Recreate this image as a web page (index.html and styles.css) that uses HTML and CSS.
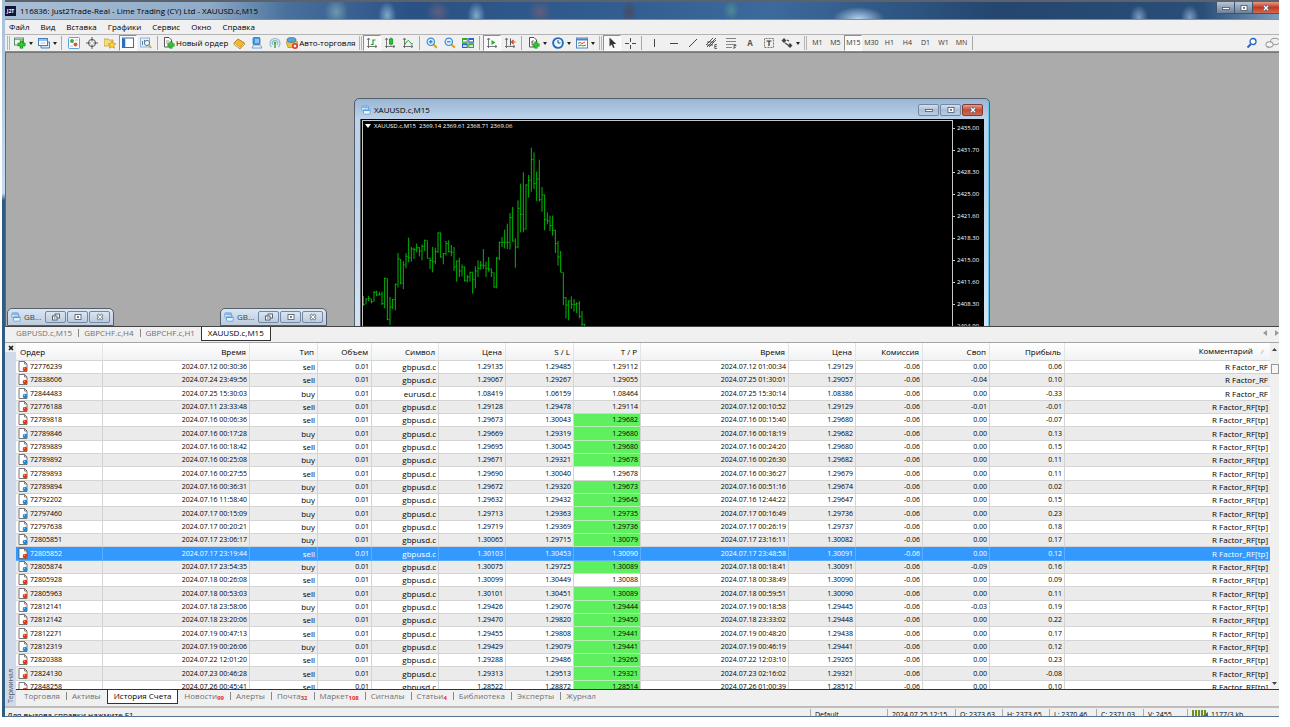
FILE: index.html
```html
<!DOCTYPE html>
<html lang="ru">
<head>
<meta charset="utf-8">
<title>116836: Just2Trade-Real - Lime Trading (CY) Ltd - XAUUSD.c,M15</title>
<link rel="stylesheet" href="styles.css">
</head>
<body>
<svg class="defs" aria-hidden="true">
  <symbol id="doc" viewBox="0 0 10 11"><path d="M1 .5h5.500L9 3v7.500H1z" fill="#fff" stroke="#555" stroke-width=".8"/><path d="M6.500 .5V3H9" fill="none" stroke="#555" stroke-width=".7"/></symbol>
  <symbol id="sell" viewBox="0 0 10 11"><use href="#doc"/><circle cx="7" cy="8" r="2.300" fill="#dc3912"/><circle cx="6.400" cy="7.300" r=".7" fill="#ffa284"/></symbol>
  <symbol id="buy" viewBox="0 0 10 11"><use href="#doc"/><circle cx="7" cy="8" r="2.300" fill="#1e86d6"/><circle cx="6.400" cy="7.300" r=".7" fill="#a5dcff"/></symbol>
  <symbol id="wins" viewBox="0 0 12 12"><rect x="1" y="1" width="8" height="6" rx="1" fill="#e8f4ff" stroke="#5b9bdb"/><path d="M1.500 2.500h7" stroke="#5b9bdb" stroke-width="1.500"/><rect x="3" y="5" width="8" height="6" rx="1" fill="#e8f4ff" stroke="#5b9bdb"/><path d="M3.500 6.500h7" stroke="#5b9bdb" stroke-width="1.500"/></symbol>
  <symbol id="min" viewBox="0 0 10 8"><rect x="1.500" y="3.500" width="7" height="2" fill="#fff" stroke="#4a5566" stroke-width=".8"/></symbol>
  <symbol id="max" viewBox="0 0 10 8"><rect x="2" y="1.500" width="6" height="5" fill="#fff" stroke="#4a5566" stroke-width=".8"/><rect x="4" y="3.200" width="2" height="1.500" fill="#4a5566"/></symbol>
  <symbol id="rest" viewBox="0 0 10 8"><rect x="4" y="1" width="4.500" height="4" fill="#fff" stroke="#4a5566" stroke-width=".9"/><rect x="1.500" y="3" width="4.500" height="4" fill="#fff" stroke="#4a5566" stroke-width=".9"/><path d="M3 5h1.500" stroke="#4a5566"/></symbol>
  <symbol id="cls" viewBox="0 0 10 8"><path d="M2.500 1.500l5 5M7.500 1.500l-5 5" stroke="#4a5566" stroke-width="2.600"/><path d="M2.800 1.800l4.400 4.400M7.200 1.800l-4.400 4.400" stroke="#fff" stroke-width="1.300"/></symbol>
  <symbol id="plus" viewBox="0 0 8 8"><path d="M4 .5v7M.5 4h7" stroke="#0a8a12" stroke-width="3"/><path d="M4 1v6M1 4h6" stroke="#2fd02f" stroke-width="1.600"/></symbol>
  <symbol id="axes" viewBox="0 0 12 12"><path d="M2.500 1v10M1 9.500h10M1.200 2.800L2.500 1l1.300 1.800M9.200 8.200l1.800 1.300-1.800 1.300" fill="none" stroke="#666" stroke-width=".9"/></symbol>
  <symbol id="lens" viewBox="0 0 12 12"><path d="M7.200 7.200l3.600 3.600" stroke="#dda62a" stroke-width="2.200"/><circle cx="4.800" cy="4.800" r="3.700" fill="#d9efff" stroke="#3f8fd4" stroke-width="1.200"/></symbol>
</svg>
<div class="app">
  <header class="titlebar">
    <span class="logo">J2T</span>
    <h1>116836: Just2Trade-Real - Lime Trading (CY) Ltd - XAUUSD.c,M15</h1>
    <div class="caption">
      <button aria-label="Свернуть"><svg><use href="#min"/></svg></button><button aria-label="Развернуть"><svg><use href="#max"/></svg></button><button class="close" aria-label="Закрыть"><svg><use href="#cls"/></svg></button>
    </div>
  </header>
  <nav class="menu">
    <button>Файл</button><button>Вид</button><button>Вставка</button><button>Графики</button><button>Сервис</button><button>Окно</button><button>Справка</button>
  </nav>
  <div class="toolbar">
    <i class="grip"></i>
    <button class="drop" aria-label="Новый график"><svg viewBox="0 0 12 12"><rect x=".5" y="1" width="9" height="7" fill="#eef7ee" stroke="#5d8a6a"/><path d="M1 2.500h8" stroke="#7fb58a"/><use href="#plus" x="3" y="3" width="9" height="9"/></svg></button>
    <button class="drop" aria-label="Профили"><svg viewBox="0 0 12 12"><path d="M3 9v2h8.500V5H10" fill="#cfe3f6" stroke="#4a86c4"/><rect x=".5" y="1.500" width="9" height="7" fill="#fff" stroke="#3f7fc2"/><path d="M1 3h8" stroke="#3f7fc2"/><path d="M2.500 6h5" stroke="#9cc3e8"/></svg></button>
    <i class="sep"></i>
    <button aria-label="Обзор рынка"><svg viewBox="0 0 12 12"><rect x=".5" y=".5" width="11" height="11" rx="1" fill="#fff" stroke="#5aa0dc"/><circle cx="4" cy="4" r="1.900" fill="#2fae3a"/><circle cx="7.500" cy="7.500" r="2" fill="#e2553c"/><path d="M7 3h3M2 9h3" stroke="#a8c8e6"/></svg></button>
    <button aria-label="Окно данных"><svg viewBox="0 0 12 12"><circle cx="6" cy="6" r="3.600" fill="none" stroke="#555"/><path d="M6 0v4.500M6 7.500V12M0 6h4.500M7.500 6H12" stroke="#555"/></svg></button>
    <button aria-label="Навигатор"><svg viewBox="0 0 12 12"><path d="M0 2h4l1 1h4v6H0z" fill="#f5dc7c" stroke="#c89c2c" stroke-width=".8"/><path d="M8 4l1.200 2.500 2.600.3-2 1.700.6 2.700L8 9.800l-2.400 1.400.6-2.700-2-1.700 2.600-.3z" fill="#ffd83a" stroke="#bd8a18" stroke-width=".7"/></svg></button>
    <button class="on" aria-label="Терминал"><svg viewBox="0 0 12 12"><rect x=".5" y="1" width="11" height="9.500" fill="#fff" stroke="#2a6fb8"/><path d="M2 1.500v9" stroke="#2a6fb8" stroke-width="2.500"/></svg></button>
    <button aria-label="Тестер"><svg viewBox="0 0 12 12"><rect x=".5" y="1" width="9" height="9" fill="#e6f0fa" stroke="#8fb2d4"/><path d="M2.500 8V4M4.500 7V3" stroke="#5580aa"/><circle cx="7" cy="6" r="2.600" fill="#dff" stroke="#678"/><path d="M8.800 8l2.500 3" stroke="#d6a030" stroke-width="1.600"/></svg></button>
    <i class="sep"></i>
    <button class="wide"><svg viewBox="0 0 12 12"><path d="M1.500 .5H6L8.500 3v7h-7z" fill="#fff" stroke="#555"/><path d="M3 4h3M3 6h3" stroke="#999"/><use href="#plus" x="4" y="4" width="8" height="8"/></svg>Новый ордер</button>
    <button aria-label="MetaEditor"><svg viewBox="0 0 12 12"><path d="M1 6l4-4 6.500 4L7 10.500z" fill="#f2b92d" stroke="#a8720c" stroke-width=".8"/><path d="M1 6v1.500L7 11.800V10.500M7 11.800L11.500 7.500V6" fill="#fff2c4" stroke="#a8720c" stroke-width=".7"/></svg></button>
    <button aria-label="Сервер"><svg viewBox="0 0 12 12"><rect x="2" y=".5" width="7" height="7" rx="1" fill="#3f96e4" stroke="#226db8" stroke-width=".7"/><path d="M4 3h4M4 5h4" stroke="#d8eeff"/><path d="M1 11l1.500-3h7l1.500 3z" fill="#e8f2fb" stroke="#5b8fbd" stroke-width=".8"/></svg></button>
    <button aria-label="Сигналы"><svg viewBox="0 0 12 12"><path d="M2.500 10a5 5 0 1 1 7 0M4 8a2.700 2.700 0 1 1 4 0" fill="none" stroke="#8fb6ce" stroke-width="1.100"/><circle cx="6" cy="6" r="1.200" fill="#3fae3f"/><path d="M6 6v5" stroke="#3fae3f" stroke-width="1.500"/></svg></button>
    <button class="wide"><svg viewBox="0 0 12 12"><path d="M0 5l6-2 6 2-1 5.500H2z" fill="#f0c040" stroke="#b4861c" stroke-width=".7"/><ellipse cx="5.500" cy="3" rx="4.500" ry="2.400" fill="#58a5dc" stroke="#2a6fa8" stroke-width=".7"/><circle cx="9" cy="9" r="3" fill="#e03a1e"/><rect x="7.800" y="7.800" width="2.400" height="2.400" fill="#fff"/></svg>Авто-торговля</button>
    <i class="grip"></i>
    <button class="on" aria-label="Бары"><svg viewBox="0 0 12 12"><use href="#axes"/><path d="M7 2.500v5.500M7 3h2.500M4.800 7.500H7" stroke="#18a028" stroke-width="1.200"/></svg></button>
    <button aria-label="Свечи"><svg viewBox="0 0 12 12"><use href="#axes"/><path d="M7 .5v8" stroke="#0d8a1d"/><rect x="5.500" y="2" width="3.200" height="5" fill="#22c832" stroke="#0d8a1d" stroke-width=".7"/></svg></button>
    <button aria-label="Линия"><svg viewBox="0 0 12 12"><use href="#axes"/><path d="M3 7.500Q6 1.500 7.500 4.500T11 7" fill="none" stroke="#18a028"/></svg></button>
    <i class="sep"></i>
    <button aria-label="Увеличить"><svg viewBox="0 0 12 12"><use href="#lens"/><path d="M3 4.800h3.600M4.800 3v3.600" stroke="#1f6cb4"/></svg></button>
    <button aria-label="Уменьшить"><svg viewBox="0 0 12 12"><use href="#lens"/><path d="M3 4.800h3.600" stroke="#1f6cb4"/></svg></button>
    <button aria-label="Расположить"><svg viewBox="0 0 12 12"><path fill="#39a82c" d="M0 1h5.700v4.800H0zM6.300 6.300H12V11H6.300z"/><path fill="#2b62c8" d="M6.300 1H12v4.800H6.300zM0 6.300h5.700V11H0z"/><path d="M1 3.800h3.700M7.300 3.800H11M1 9h3.700M7.300 9H11" stroke="#fff" stroke-width="1.400"/></svg></button>
    <i class="sep"></i>
    <button class="on" aria-label="Автопрокрутка"><svg viewBox="0 0 12 12"><use href="#axes"/><path d="M5.500 3l4 2.500-4 2.500z" fill="#22b032"/></svg></button>
    <button aria-label="Сдвиг"><svg viewBox="0 0 12 12"><use href="#axes"/><path d="M6.500 1.500v7" stroke="#555"/><path d="M11.500 5H8M9.500 3L7.500 5l2 2" fill="none" stroke="#d2451e" stroke-width="1.200"/></svg></button>
    <i class="sep"></i>
    <button class="drop" aria-label="Индикаторы"><svg viewBox="0 0 12 12"><path d="M1.500 .5H6L8.500 3v7h-7z" fill="#fff" stroke="#555"/><path d="M5.500 3Q4 3 4 8M3 5h2.500" fill="none" stroke="#555" stroke-width=".8"/><use href="#plus" x="4" y="4" width="8" height="8"/></svg></button>
    <button class="drop" aria-label="Периоды"><svg viewBox="0 0 12 12"><circle cx="6" cy="6" r="4.900" fill="#eaf5ff" stroke="#1f6cc0" stroke-width="1.900"/><path d="M6 3v3h2.500" fill="none" stroke="#444"/></svg></button>
    <button class="drop" aria-label="Шаблоны"><svg viewBox="0 0 12 12"><rect x=".5" y="1" width="11" height="10" fill="#fff" stroke="#4a86c4"/><path d="M1 2.500h10" stroke="#4a86c4" stroke-width="2"/><path d="M2 6.500l2-1 2 1 3-1.500" fill="none" stroke="#d04828"/><path d="M2 9l3-1 2 1 3-1" fill="none" stroke="#28a038"/></svg></button>
    <i class="grip"></i>
    <button class="on" aria-label="Курсор"><svg viewBox="0 0 12 12"><path d="M3.500 .5v9l2.200-2 1.500 3.500 1.400-.6L7.200 7h3z" fill="#333"/></svg></button>
    <button aria-label="Перекрестие"><svg viewBox="0 0 12 12"><path d="M6.500 1v4M6.500 8v4M1 6.500h4M8 6.500h4" stroke="#444"/></svg></button>
    <i class="sep"></i>
    <button class="tool" aria-label="Вертикальная линия"><svg viewBox="0 0 12 12"><path d="M5.500 2v8" stroke="#444"/></svg></button>
    <button class="tool" aria-label="Горизонтальная линия"><svg viewBox="0 0 12 12"><path d="M2 6.500h8" stroke="#444"/></svg></button>
    <button class="tool" aria-label="Трендовая линия"><svg viewBox="0 0 12 12"><path d="M2 10l8-8" stroke="#444"/></svg></button>
    <button class="tool" aria-label="Канал"><svg viewBox="0 0 12 12"><path d="M0 8l7-7M1 10l9-9M3 10l7-7M1 5h7M1 8h6" stroke="#444" stroke-width=".9"/><path d="M11 7.500H8.800v4H11M8.800 9.500h2" fill="none" stroke="#444" stroke-width=".8"/></svg></button>
    <button class="tool" aria-label="Фибоначчи"><svg viewBox="0 0 12 12"><path d="M1 1.500h10M1 4.500h10M1 7.500h10M1 10.500h6" stroke="#777" stroke-width=".9"/><path d="M11.500 8.500H9V12M9 10.300h2" fill="none" stroke="#444" stroke-width=".8"/></svg></button>
    <button class="tool letter">A</button>
    <button class="tool" aria-label="Метка"><svg viewBox="0 0 12 12"><rect x="1.500" y="1.500" width="9" height="9" fill="none" stroke="#777" stroke-dasharray="1 .5"/><path d="M3.500 4h5M6 4v5" stroke="#333" stroke-width="1.200"/></svg></button>
    <button class="drop" aria-label="Стрелки"><svg viewBox="0 0 12 12"><path d="M3 1l2.500 2.500L3 6 .5 3.500zM9 6l2.500 2.500L9 11 6.500 8.500z" fill="#444"/><path d="M4 6l3 2M6 3l2 1" stroke="#444" stroke-width="1.200"/></svg></button>
    <i class="grip"></i>
    <button class="tf">M1</button><button class="tf">M5</button><button class="tf on">M15</button><button class="tf">M30</button><button class="tf">H1</button><button class="tf">H4</button><button class="tf">D1</button><button class="tf">W1</button><button class="tf">MN</button>
    <i class="sep"></i>
    <button class="push" aria-label="Поиск"><svg viewBox="0 0 12 12"><path d="M5 7L1.500 10.500" stroke="#2a62cc" stroke-width="2"/><circle cx="7" cy="4.500" r="3" fill="#fff" stroke="#2a62cc" stroke-width="1.300"/></svg></button>
    <button class="chat" aria-label="Чат"><svg viewBox="0 0 14 12"><ellipse cx="10" cy="4.500" rx="4.500" ry="3.200" fill="#eee" stroke="#999"/><path d="M3 9l-1 2.500L5 10z" fill="#999"/><ellipse cx="4.500" cy="7.500" rx="3.800" ry="2.800" fill="#f4f4f4" stroke="#888"/></svg></button>
  </div>

  <main class="desk">
    <section class="mdi chart">
      <header><svg class="ico"><use href="#wins"/></svg><h2>XAUUSD.c,M15</h2>
        <button aria-label="Свернуть"><svg><use href="#min"/></svg></button><button aria-label="Развернуть"><svg><use href="#max"/></svg></button><button class="close" aria-label="Закрыть"><svg><use href="#cls"/></svg></button></header>
      <div class="plot">
        <div class="canvas">
          <p><svg class="tri" viewBox="0 0 6 4"><path d="M0 0h6L3 4z" fill="#fff"/></svg>XAUUSD.c,M15&nbsp; 2369.14 2369.61 2368.71 2369.06</p>
          <svg class="bars" viewBox="38 78 780 621"><path class="stem" d="M39 603V633M47 610V628M55 603V618M63 611V625M71 588V620M79 587V603M87 590V602M95 590V630M103 548V640M111 550V675M119 606V690M127 612V642M135 566V646M143 474V578M151 492V568M159 498V582M167 474V520M175 428V502M183 456V500M191 458V492M199 446V472M207 456V484M215 448V496M223 434V468M231 436V490M239 488V522M247 456V532M255 458V508M263 412V474M271 412V488M279 474V508M287 438V482M295 436V472M303 450V484M311 456V528M319 496V560M327 488V546M335 508V544M343 514V560M351 540V562M359 530V560M367 530V596M375 514V580M383 496V546M391 498V524M399 462V522M407 500V546M415 486V530M423 520V546M431 532V578M439 486V580M447 440V496M455 426V456M463 404V460M471 386V462M479 354V464M487 336V440M495 430V518M503 316V460M511 266V412M519 232V412M527 268V404M535 240V308M543 158V290M551 172V282M559 230V318M567 194V320M575 276V350M583 298V406M591 352V388M599 362V408M607 362V422M615 404V474M623 438V512M631 468V532M639 532V630M647 606V670M655 616V676M663 604V642M671 612V650M679 622V654M687 618V670M695 648V699M703 686V699"/>
          <path class="tick" d="M39 628h6M47 612h6M55 610h6M63 620h6M71 592h6M79 600h6M87 598h6M95 626h6M103 550h6M111 674h6M119 636h6M127 614h6M135 568h6M143 492h6M151 564h6M159 510h6M167 484h6M175 488h6M183 462h6M191 464h6M199 458h6M207 468h6M215 454h6M223 436h6M231 490h6M239 496h6M247 500h6M255 470h6M263 414h6M271 486h6M279 476h6M287 446h6M295 470h6M303 472h6M311 516h6M319 498h6M327 528h6M335 516h6M343 556h6M351 546h6M359 532h6M367 554h6M375 528h6M383 520h6M391 510h6M399 512h6M407 520h6M415 522h6M423 532h6M431 576h6M439 490h6M447 442h6M455 442h6M463 442h6M471 442h6M479 368h6M487 438h6M495 456h6M503 340h6M511 358h6M519 402h6M527 270h6M535 256h6M543 194h6M551 266h6M559 252h6M567 314h6M575 300h6M583 374h6M591 378h6M599 392h6M607 406h6M615 446h6M623 486h6M631 532h6M639 608h6M647 630h6M655 618h6M663 628h6M671 628h6M679 626h6M687 664h6M695 688h6"/></svg>
        </div>
        <ol class="scale"><li>2435.00</li><li>2431.70</li><li>2428.30</li><li>2425.00</li><li>2421.60</li><li>2418.30</li><li>2415.00</li><li>2411.60</li><li>2408.30</li><li>2404.90</li></ol>
      </div>
    </section>
    <section class="mdi mini first"><svg class="ico"><use href="#wins"/></svg><span>GB...</span><button aria-label="Восстановить"><svg><use href="#rest"/></svg></button><button aria-label="Развернуть"><svg><use href="#max"/></svg></button><button aria-label="Закрыть"><svg><use href="#cls"/></svg></button></section>
    <section class="mdi mini second"><svg class="ico"><use href="#wins"/></svg><span>GB...</span><button aria-label="Восстановить"><svg><use href="#rest"/></svg></button><button aria-label="Развернуть"><svg><use href="#max"/></svg></button><button aria-label="Закрыть"><svg><use href="#cls"/></svg></button></section>
  </main>

  <nav class="tabs charts"><button>GBPUSD.c,M15</button><button>GBPCHF.c,H4</button><button>GBPCHF.c,H1</button><button class="active">XAUUSD.c,M15</button><span class="arrows"><svg viewBox="0 0 4 6"><path d="M4 0v6L0 3z"/></svg><svg viewBox="0 0 4 6"><path d="M0 0v6l4-3z"/></svg></span></nav>

  <section class="terminal">
    <aside><button aria-label="Закрыть"><svg viewBox="0 0 6 6"><path d="M1 1l4 4M5 1L1 5" stroke="#111" stroke-width="1.500"/></svg></button><span>Терминал</span></aside>
    <div class="panel">
      <div class="sheet">
      <table>
        <colgroup><col class="c-order"><col class="c-open"><col class="c-wide"><col class="c-vol"><col class="c-num"><col class="c-num"><col class="c-wide"><col class="c-num"><col class="c-time"><col class="c-num"><col class="c-num"><col class="c-num"><col class="c-profit"><col></colgroup>
        <thead><tr><th>Ордер<th>Время<th>Тип<th>Объем<th>Символ<th>Цена<th>S / L<th>T / P<th>Время<th>Цена<th>Комиссия<th>Своп<th>Прибыль<th class="sorted">Комментарий<i>/</i></tr></thead>
        <tbody>
        <tr><td><svg><use href="#sell"/></svg>72776239<td>2024.07.12 00:30:36<td>sell<td>0.01<td>gbpusd.c<td>1.29135<td>1.29485<td>1.29112<td>2024.07.12 01:00:34<td>1.29129<td>-0.06<td>0.00<td>0.06<td>R Factor_RF
        <tr><td><svg><use href="#sell"/></svg>72838606<td>2024.07.24 23:49:56<td>sell<td>0.01<td>gbpusd.c<td>1.29067<td>1.29267<td>1.29055<td>2024.07.25 01:30:01<td>1.29057<td>-0.06<td>-0.04<td>0.10<td>R Factor_RF
        <tr><td><svg><use href="#buy"/></svg>72844483<td>2024.07.25 15:30:03<td>buy<td>0.01<td>eurusd.c<td>1.08419<td>1.06159<td>1.08464<td>2024.07.25 15:30:14<td>1.08386<td>-0.06<td>0.00<td>-0.33<td>R Factor_RF
        <tr><td><svg><use href="#sell"/></svg>72776188<td>2024.07.11 23:33:48<td>sell<td>0.01<td>gbpusd.c<td>1.29128<td>1.29478<td>1.29114<td>2024.07.12 00:10:52<td>1.29129<td>-0.06<td>-0.01<td>-0.01<td>R Factor_RF[tp]
        <tr><td><svg><use href="#sell"/></svg>72789818<td>2024.07.16 00:06:36<td>sell<td>0.01<td>gbpusd.c<td>1.29673<td>1.30043<td class="hit">1.29682<td>2024.07.16 00:15:40<td>1.29680<td>-0.06<td>0.00<td>-0.07<td>R Factor_RF[tp]
        <tr><td><svg><use href="#buy"/></svg>72789846<td>2024.07.16 00:17:28<td>buy<td>0.01<td>gbpusd.c<td>1.29669<td>1.29319<td class="hit">1.29680<td>2024.07.16 00:18:19<td>1.29682<td>-0.06<td>0.00<td>0.13<td>R Factor_RF[tp]
        <tr><td><svg><use href="#sell"/></svg>72789889<td>2024.07.16 00:18:42<td>sell<td>0.01<td>gbpusd.c<td>1.29695<td>1.30045<td class="hit">1.29680<td>2024.07.16 00:24:20<td>1.29680<td>-0.06<td>0.00<td>0.15<td>R Factor_RF[tp]
        <tr><td><svg><use href="#buy"/></svg>72789892<td>2024.07.16 00:25:08<td>buy<td>0.01<td>gbpusd.c<td>1.29671<td>1.29321<td class="hit">1.29678<td>2024.07.16 00:26:30<td>1.29682<td>-0.06<td>0.00<td>0.11<td>R Factor_RF[tp]
        <tr><td><svg><use href="#sell"/></svg>72789893<td>2024.07.16 00:27:55<td>sell<td>0.01<td>gbpusd.c<td>1.29690<td>1.30040<td>1.29678<td>2024.07.16 00:36:27<td>1.29679<td>-0.06<td>0.00<td>0.11<td>R Factor_RF[tp]
        <tr><td><svg><use href="#buy"/></svg>72789894<td>2024.07.16 00:36:31<td>buy<td>0.01<td>gbpusd.c<td>1.29672<td>1.29320<td class="hit">1.29673<td>2024.07.16 00:51:16<td>1.29674<td>-0.06<td>0.00<td>0.02<td>R Factor_RF[tp]
        <tr><td><svg><use href="#buy"/></svg>72792202<td>2024.07.16 11:58:40<td>buy<td>0.01<td>gbpusd.c<td>1.29632<td>1.29432<td class="hit">1.29645<td>2024.07.16 12:44:22<td>1.29647<td>-0.06<td>0.00<td>0.15<td>R Factor_RF[tp]
        <tr><td><svg><use href="#buy"/></svg>72797460<td>2024.07.17 00:15:09<td>buy<td>0.01<td>gbpusd.c<td>1.29713<td>1.29363<td class="hit">1.29735<td>2024.07.17 00:16:49<td>1.29736<td>-0.06<td>0.00<td>0.23<td>R Factor_RF[tp]
        <tr><td><svg><use href="#buy"/></svg>72797638<td>2024.07.17 00:20:21<td>buy<td>0.01<td>gbpusd.c<td>1.29719<td>1.29369<td class="hit">1.29736<td>2024.07.17 00:26:19<td>1.29737<td>-0.06<td>0.00<td>0.18<td>R Factor_RF[tp]
        <tr><td><svg><use href="#buy"/></svg>72805851<td>2024.07.17 23:06:17<td>buy<td>0.01<td>gbpusd.c<td>1.30065<td>1.29715<td class="hit">1.30079<td>2024.07.17 23:16:11<td>1.30082<td>-0.06<td>0.00<td>0.17<td>R Factor_RF[tp]
        <tr class="selected"><td><svg><use href="#sell"/></svg>72805852<td>2024.07.17 23:19:44<td>sell<td>0.01<td>gbpusd.c<td>1.30103<td>1.30453<td>1.30090<td>2024.07.17 23:48:58<td>1.30091<td>-0.06<td>0.00<td>0.12<td>R Factor_RF[tp]
        <tr><td><svg><use href="#buy"/></svg>72805874<td>2024.07.17 23:54:35<td>buy<td>0.01<td>gbpusd.c<td>1.30075<td>1.29725<td class="hit">1.30089<td>2024.07.18 00:18:41<td>1.30091<td>-0.06<td>-0.09<td>0.16<td>R Factor_RF[tp]
        <tr><td><svg><use href="#sell"/></svg>72805928<td>2024.07.18 00:26:08<td>sell<td>0.01<td>gbpusd.c<td>1.30099<td>1.30449<td>1.30088<td>2024.07.18 00:38:49<td>1.30090<td>-0.06<td>0.00<td>0.09<td>R Factor_RF[tp]
        <tr><td><svg><use href="#sell"/></svg>72805963<td>2024.07.18 00:53:03<td>sell<td>0.01<td>gbpusd.c<td>1.30101<td>1.30451<td class="hit">1.30089<td>2024.07.18 00:59:51<td>1.30090<td>-0.06<td>0.00<td>0.11<td>R Factor_RF[tp]
        <tr><td><svg><use href="#buy"/></svg>72812141<td>2024.07.18 23:58:06<td>buy<td>0.01<td>gbpusd.c<td>1.29426<td>1.29076<td class="hit">1.29444<td>2024.07.19 00:18:58<td>1.29445<td>-0.06<td>-0.03<td>0.19<td>R Factor_RF[tp]
        <tr><td><svg><use href="#sell"/></svg>72812142<td>2024.07.18 23:20:06<td>sell<td>0.01<td>gbpusd.c<td>1.29470<td>1.29820<td class="hit">1.29450<td>2024.07.18 23:33:02<td>1.29448<td>-0.06<td>0.00<td>0.22<td>R Factor_RF[tp]
        <tr><td><svg><use href="#sell"/></svg>72812271<td>2024.07.19 00:47:13<td>sell<td>0.01<td>gbpusd.c<td>1.29455<td>1.29808<td class="hit">1.29441<td>2024.07.19 00:48:20<td>1.29438<td>-0.06<td>0.00<td>0.17<td>R Factor_RF[tp]
        <tr><td><svg><use href="#buy"/></svg>72812319<td>2024.07.19 00:26:06<td>buy<td>0.01<td>gbpusd.c<td>1.29429<td>1.29079<td class="hit">1.29441<td>2024.07.19 00:46:19<td>1.29441<td>-0.06<td>0.00<td>0.12<td>R Factor_RF[tp]
        <tr><td><svg><use href="#sell"/></svg>72820388<td>2024.07.22 12:01:20<td>sell<td>0.01<td>gbpusd.c<td>1.29288<td>1.29486<td class="hit">1.29265<td>2024.07.22 12:03:10<td>1.29265<td>-0.06<td>0.00<td>0.23<td>R Factor_RF[tp]
        <tr><td><svg><use href="#sell"/></svg>72824130<td>2024.07.23 00:46:28<td>sell<td>0.01<td>gbpusd.c<td>1.29313<td>1.29513<td class="hit">1.29321<td>2024.07.23 02:16:02<td>1.29321<td>-0.06<td>0.00<td>-0.08<td>R Factor_RF[tp]
        <tr><td><svg><use href="#sell"/></svg>72848258<td>2024.07.26 00:45:41<td>sell<td>0.01<td>gbpusd.c<td>1.28522<td>1.28872<td class="hit">1.28514<td>2024.07.26 01:00:39<td>1.28512<td>-0.06<td>0.00<td>0.10<td>R Factor_RF[tp]
        </tbody>
      </table>
      <div class="scrollbar"><svg viewBox="0 0 5 3"><path d="M0 3h5L2.500 0z"/></svg><i></i><svg class="down" viewBox="0 0 5 3"><path d="M0 0h5L2.500 3z"/></svg></div>
      </div>
      <nav class="tabs"><button>Торговля</button><button>Активы</button><button class="active">История Счета</button><button>Новости<sub>99</sub></button><button>Алерты</button><button>Почта<sub>32</sub></button><button>Маркет<sub>108</sub></button><button>Сигналы</button><button>Статьи<sub>4</sub></button><button>Библиотека</button><button>Эксперты</button><button>Журнал</button></nav>
    </div>
  </section>
  <footer class="status"><span class="help">Для вызова справки нажмите F1</span><span class="s-default">Default</span><span class="s-time">2024.07.25 12:15</span><span class="s-price">O: 2373.63</span><span class="s-price">H: 2373.65</span><span class="s-price">L: 2370.46</span><span class="s-price">C: 2371.03</span><span class="s-vol">V: 2455</span><span class="s-net"><svg viewBox="0 0 16 8"><path d="M1 0v8M4 0v8M7 0v8M10 0v8" stroke="#6d8f1d" stroke-width="2"/><path d="M8 8l8-6v6z" fill="#2d6f9a"/><path d="M13 0v5" stroke="#6d8f1d" stroke-width="2"/></svg>1177/3 kb</span></footer>
</div>
</body>
</html>
```
FILE: styles.css
```css
* { box-sizing: border-box; }
body { margin: 0; background: #fff; font: 8px/12px "Open Sans", "Noto Sans", sans-serif; color: #000; }
button { margin: 0; padding: 0; border: 0; background: none; font: inherit; color: inherit; white-space: nowrap; }
h1, h2, p, ol { margin: 0; padding: 0; font: inherit; list-style: none; }
svg { display: block; flex: none; }
.defs { display: none; }

.app {
  display: grid;
  grid-template: 20px 14px 18px minmax(0, 275fr) 16px minmax(0, 363fr) 11px / minmax(0, 1fr);
  height: calc(100vh - 10px);
  margin: 0 11px 0 2px;
  border-left: 3px solid;
  border-image: linear-gradient(#a8bfd6, #c7dcf0 27%, #2f5c80 28%) 1;
  background: #f0f0f0;
  overflow: hidden;
}

.titlebar {
  display: flex;
  align-items: center;
  gap: 4px;
  border-top: 2px solid #5c626b;
  border-bottom: 1px solid #7890aa;
  background:
    radial-gradient(ellipse 26px 12px at 67% 100%, #b9d2ee, transparent),
    radial-gradient(ellipse 12px 14px at 26% 60%, #6f97b0, transparent),
    radial-gradient(ellipse 9px 14px at 30% 80%, #7fa9cc, transparent),
    radial-gradient(ellipse 12px 12px at 34% 60%, #5f5f7c, transparent),
    radial-gradient(ellipse 9px 14px at 37% 80%, #7fa9cc, transparent),
    radial-gradient(ellipse 12px 12px at 42% 60%, #5f5f7c, transparent),
    radial-gradient(ellipse 8px 12px at 49% 60%, #4a4a62, transparent),
    radial-gradient(ellipse 8px 10px at 57% 50%, #4d8a90, transparent),
    radial-gradient(ellipse 9px 12px at 89% 90%, #7d9dc0, transparent),
    radial-gradient(ellipse 9px 12px at 93% 90%, #7d9dc0, transparent),
    linear-gradient(90deg, #a9bfd6, #8fabc8 16%, #4a719c 22%, #2a5184 32%, #335f92 50%, #3d6a9c 60%, #24466f 78%, #2a4e78 94%, #7e9dbd);
}
.titlebar h1 { flex: 1; color: #000; }
.logo { width: 11px; background: #14143a; color: #fff; font: 700 5px/10px "Open Sans", sans-serif; text-align: center; }
.caption { display: flex; align-self: flex-start; height: 12px; border: 1px solid #3f536a; border-width: 0 0 1px 1px; border-radius: 0 0 0 3px; }
.caption button { width: 18px; background: linear-gradient(#b7c5d6, #6d819b); border-right: 1px solid #40566e; }
.caption button.close { width: 26px; background: linear-gradient(#e39a8a, #c23a22 50%, #d46a4c); border-right: 0; }
.caption svg { width: 10px; height: 8px; margin: 0 auto; }

.menu { display: flex; align-items: center; gap: 11px; padding-left: 4px; }

.toolbar { display: flex; align-items: center; border-top: 1px solid #b4b4b4; border-bottom: 1px solid #8a8a8a; overflow: hidden; }
.toolbar button { flex: none; display: flex; align-items: center; justify-content: center; width: 18px; height: 16px; }
.toolbar svg { width: 12px; height: 12px; }
.toolbar .drop { width: 24px; justify-content: flex-start; gap: 3px; padding-left: 3px; }
.toolbar .drop::after { content: ""; border: 2px solid transparent; border-top: 3px solid #222; border-bottom: 0; }
.toolbar .wide { width: auto; gap: 1px; padding: 0 2px; }
.toolbar .tool { width: 19px; }
.toolbar .letter { font: 700 8px/12px "Open Sans", sans-serif; color: #555; }
.toolbar .tf { font-size: 7px; color: #333; }
.toolbar .on { border: 1px solid; border-color: #8f8f8f #fff #fff #8f8f8f; background: #f9f9f9; }
.toolbar .push { margin-left: auto; }
.toolbar .chat { justify-content: flex-end; }
.toolbar .chat svg { width: 14px; }
.grip { flex: none; width: 3px; height: 14px; margin: 0 1px 0 2px; border: 1px solid #b5b5b5; border-width: 0 1px; }
.sep { flex: none; width: 1px; height: 14px; margin: 0 3px 0 2px; background: #a8a8a8; }

.desk { position: relative; overflow: hidden; background: #ababab; border-top: 1px solid #777; border-left: 1px solid #666; border-bottom: 1px solid #444; }
.mdi { position: absolute; border: 1px solid #555f6b; border-radius: 5px 5px 0 0; background: linear-gradient(#9ab6d3, #bcd3ea 20px, #b8d2ec 80px, #d7e6f7); }
.mdi button { display: grid; place-items: center; width: 21px; height: 12px; border: 1px solid #7488a3; border-radius: 2px; background: linear-gradient(#d3e1f0, #a9bfd8 50%, #b9cfe6); }
.mdi button svg { width: 10px; height: 8px; }
.mdi .close { border-color: #8a3a34; background: linear-gradient(#e2a196, #c44a34 50%, #cf6a50); }
.ico { width: 10px; height: 10px; }
.chart { left: 348px; top: 45px; width: 636px; height: 250px; padding: 0 5px; display: flex; flex-direction: column; box-shadow: inset -1px 0 #60c8ea; }
.chart header { flex: 0 0 20px; display: flex; align-items: center; gap: 1px; padding: 2px 1px 0; }
.chart h2 { flex: 1; padding-left: 2px; }
.plot { flex: 1; display: flex; border-left: 1px solid #555; background: #000; color: #fff; font: 6px/8px "Open Sans", "Noto Sans", sans-serif; }
.canvas { flex: 1; margin: 1px 0 0 1px; border: 1px solid #c8c8c8; border-bottom: 0; position: relative; }
.canvas p { display: flex; align-items: center; gap: 3px; padding: 1px 2px; }
.tri { width: 6px; height: 4px; }
.bars { position: absolute; left: 0; top: 0; width: 260px; height: 207px; fill: none; stroke-width: 3; }
.stem { stroke: #00b800; }
.tick { stroke: #00e000; stroke-width: 2; }
.scale { width: 31px; padding-top: 5px; }
.scale li { position: relative; height: 22px; padding-left: 4px; }
.scale li::before { content: ""; position: absolute; left: 0; top: 4px; width: 2px; height: 1px; background: #c8c8c8; }
.mini { bottom: 0; width: 107px; height: 18px; display: flex; align-items: center; gap: 1px; padding: 0 3px; background: linear-gradient(#dbe6f2, #bccbdd); }
.mini span { flex: 1; padding-left: 2px; color: #444; }
.mini button { background: linear-gradient(#dbe6f2, #bccbdd); }
.first { left: 1px; }
.second { left: 214px; }

.tabs { display: flex; align-items: flex-start; background: #f0f0f0; color: #707070; }
.tabs button { display: flex; position: relative; height: 12px; padding: 0 6px; line-height: 12px; }
.tabs button + button::before { content: ""; position: absolute; left: 0; top: 2px; width: 1px; height: 8px; background: #888; }
.tabs .active { height: 14px; border: 1px solid #333; border-top: 0; background: #fff; color: #000; }
.tabs .active::before, .tabs .active + button::before { display: none; }
.tabs sub { font: 700 6px/17px "Open Sans", sans-serif; color: #ed2a2a; vertical-align: baseline; }
.charts { border-bottom: 1px solid #a5a5a5; padding-left: 5px; }
.arrows { display: flex; gap: 8px; margin: 3px 0 0 auto; }
.arrows svg { width: 4px; height: 6px; fill: #999; }

.terminal { display: flex; min-height: 0; }
aside { flex: 0 0 11px; display: flex; flex-direction: column; justify-content: space-between; align-items: center; background: #cfdbe8; }
aside button { width: 11px; height: 9px; background: #f0f0f0; }
aside svg { width: 6px; height: 6px; margin: 0 auto; }
aside span { writing-mode: vertical-rl; transform: rotate(180deg); color: #556; line-height: 11px; padding-top: 3px; font-size: 7px; }
.panel { flex: 1; min-width: 0; display: flex; flex-direction: column; }
.sheet { flex: 1; min-height: 0; display: flex; overflow: hidden; background: #fff; border-bottom: 1px solid #333; }
.panel .tabs { flex: 0 0 16px; padding-left: 2px; }
table { flex: 1; width: 100%; height: 0; table-layout: fixed; border-collapse: separate; border-spacing: 0; font-size: 7px; }
.c-order { width: 87px; }
.c-open { width: 147px; }
.c-time { width: 148px; }
.c-num { width: 67px; }
.c-wide { width: 68px; }
.c-vol { width: 54px; }
.c-profit { width: 75px; }
th, td { padding: 0 2px; overflow: hidden; text-align: right; font-weight: 400; white-space: nowrap; border-right: 1px solid #d4d4d4; }
th { height: 17px; padding-right: 3px; font-size: 8px; line-height: 16px; background: linear-gradient(#fff, #f1f2f4); border-right-color: #e3e5e8; border-bottom: 1px solid #d5d5d5; }
th:first-child { text-align: left; padding-left: 4px; }
th:last-child, td:last-child { border-right: 0; }
th i { padding: 0 4px 0 8px; font-size: 6px; color: #777; }
td { height: 13px; line-height: 12px; border-bottom: 1px solid #d4d4d4; }
tbody tr:nth-child(3n) td { height: 14px; }
tbody tr:last-child td { line-height: 10px; }
td:first-child { text-align: left; }
td:nth-child(3), td:nth-child(5), td:last-child { font-size: 8px; }
td svg { display: inline-block; width: 10px; height: 11px; margin-right: 2px; vertical-align: top; }
tbody tr:nth-child(even) { background: #ebebeb; }
td.hit { background: #5ef05e; border-bottom-color: #b4f0b4; }
tbody .selected { background: #3399ff; color: #fff; }
.selected td { border-color: #5aaeff; }
.scrollbar { flex: 0 0 9px; display: flex; flex-direction: column; align-items: center; background: #f0f0f0; padding: 5px 0 4px; }
.scrollbar svg { width: 5px; height: 3px; fill: #444; }
.scrollbar i { width: 8px; height: 10px; margin-top: 13px; border: 1px solid #999; background: #f5f5f5; }
.scrollbar .down { margin-top: auto; }

.status { display: flex; border-top: 2px solid #bdbdbd; border-bottom: 1px solid #52708f; overflow: hidden; font-size: 7px; line-height: 12px; padding-top: 1px; }
.status span { flex: none; padding-left: 4px; border-left: 1px solid #aaa; white-space: nowrap; }
.status .help { flex: 1; padding-left: 2px; border: 0; font-size: 8px; }
.status .s-default { width: 77px; }
.status .s-time { width: 68px; }
.status .s-price { width: 47px; }
.status .s-vol { width: 44px; }
.status .s-net { width: 92px; display: flex; gap: 3px; }
.s-net svg { width: 16px; height: 8px; margin-top: 1px; }
```
